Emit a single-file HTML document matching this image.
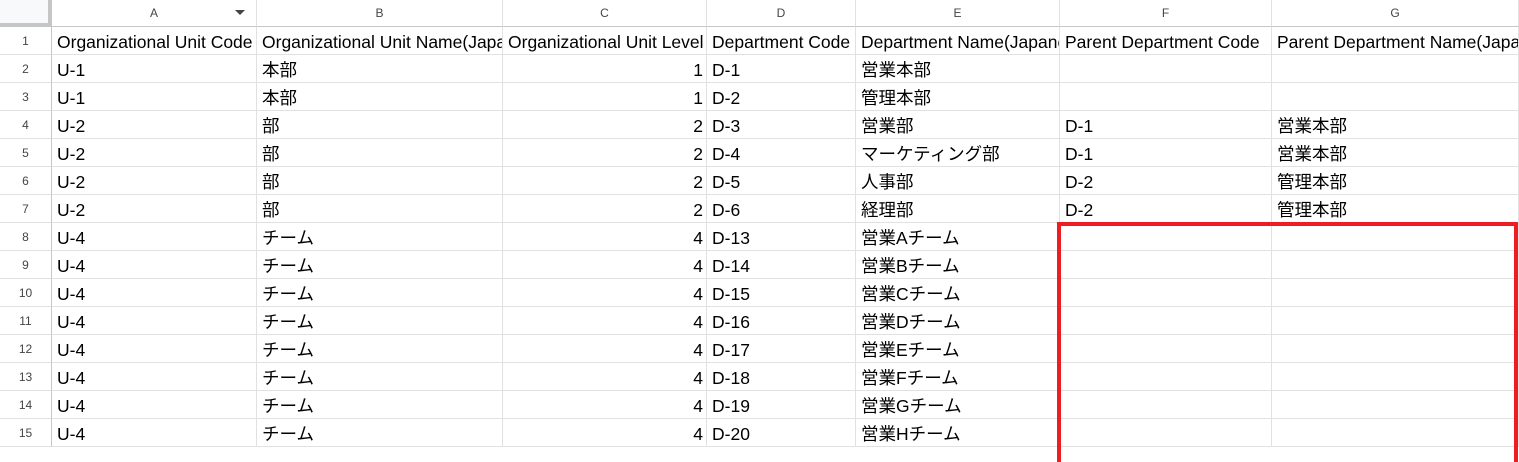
<!DOCTYPE html>
<html><head><meta charset="utf-8"><style>
body{margin:0;width:1519px;height:446px;overflow:hidden;background:#fff;font-family:"Liberation Sans","Noto Sans CJK JP",sans-serif;position:relative}
.row{position:absolute;left:0;width:1519px;height:28px}
.row>div{position:absolute;top:0;border-bottom:1px solid #e1e1e1;border-right:1px solid #e1e1e1;overflow:hidden;white-space:nowrap;font-size:17.5px;line-height:31px;color:#000;padding:0 3px 0 5px;box-sizing:border-box;height:28px}
.row>.n{left:0;width:52px;font-size:12px;color:#444;text-align:center;border-right:1px solid #c4c7c5;line-height:29px;padding:0}
.row>.a{left:52px;width:205px}
.row>.b{left:257px;width:246px}
.row>.c{left:503px;width:204px;text-align:right}
.row>.d{left:707px;width:149px}
.row>.e{left:856px;width:204px}
.row>.f{left:1060px;width:212px}
.row>.g{left:1272px;width:247px}
.hd{top:0;height:27px}
.hd>div{height:27px;font-size:12px;color:#444;text-align:center;line-height:26px;border-bottom:1px solid #c4c7c5;padding:0}
.hd>.c{text-align:center}
.hd>.n{background:#f8f9fa;border-right:4px solid #c4c7c5;border-bottom:4px solid #c4c7c5;height:27px}
.red{position:absolute;left:1057px;top:222px;width:461px;height:240px;border:4px solid #ee1d24;box-sizing:border-box;border-bottom:none}
.dd{position:absolute;left:235px;top:10px;width:0;height:0;border-left:5px solid transparent;border-right:5px solid transparent;border-top:5px solid #444}
</style></head><body>
<div class="row hd"><div class="n"></div><div class="a">A</div><div class="b">B</div><div class="c">C</div><div class="d">D</div><div class="e">E</div><div class="f">F</div><div class="g">G</div></div>
<div class="row" style="top:27px"><div class="n">1</div><div class="a">Organizational Unit Code</div><div class="b">Organizational Unit Name(Japanese)</div><div class="c" style="text-align:left">Organizational Unit Level</div><div class="d">Department Code</div><div class="e">Department Name(Japanese)</div><div class="f">Parent Department Code</div><div class="g">Parent Department Name(Japanese)</div></div>
<div class="row" style="top:55px"><div class="n">2</div><div class="a">U-1</div><div class="b">本部</div><div class="c">1</div><div class="d">D-1</div><div class="e">営業本部</div><div class="f"></div><div class="g"></div></div>
<div class="row" style="top:83px"><div class="n">3</div><div class="a">U-1</div><div class="b">本部</div><div class="c">1</div><div class="d">D-2</div><div class="e">管理本部</div><div class="f"></div><div class="g"></div></div>
<div class="row" style="top:111px"><div class="n">4</div><div class="a">U-2</div><div class="b">部</div><div class="c">2</div><div class="d">D-3</div><div class="e">営業部</div><div class="f">D-1</div><div class="g">営業本部</div></div>
<div class="row" style="top:139px"><div class="n">5</div><div class="a">U-2</div><div class="b">部</div><div class="c">2</div><div class="d">D-4</div><div class="e">マーケティング部</div><div class="f">D-1</div><div class="g">営業本部</div></div>
<div class="row" style="top:167px"><div class="n">6</div><div class="a">U-2</div><div class="b">部</div><div class="c">2</div><div class="d">D-5</div><div class="e">人事部</div><div class="f">D-2</div><div class="g">管理本部</div></div>
<div class="row" style="top:195px"><div class="n">7</div><div class="a">U-2</div><div class="b">部</div><div class="c">2</div><div class="d">D-6</div><div class="e">経理部</div><div class="f">D-2</div><div class="g">管理本部</div></div>
<div class="row" style="top:223px"><div class="n">8</div><div class="a">U-4</div><div class="b">チーム</div><div class="c">4</div><div class="d">D-13</div><div class="e">営業Aチーム</div><div class="f"></div><div class="g"></div></div>
<div class="row" style="top:251px"><div class="n">9</div><div class="a">U-4</div><div class="b">チーム</div><div class="c">4</div><div class="d">D-14</div><div class="e">営業Bチーム</div><div class="f"></div><div class="g"></div></div>
<div class="row" style="top:279px"><div class="n">10</div><div class="a">U-4</div><div class="b">チーム</div><div class="c">4</div><div class="d">D-15</div><div class="e">営業Cチーム</div><div class="f"></div><div class="g"></div></div>
<div class="row" style="top:307px"><div class="n">11</div><div class="a">U-4</div><div class="b">チーム</div><div class="c">4</div><div class="d">D-16</div><div class="e">営業Dチーム</div><div class="f"></div><div class="g"></div></div>
<div class="row" style="top:335px"><div class="n">12</div><div class="a">U-4</div><div class="b">チーム</div><div class="c">4</div><div class="d">D-17</div><div class="e">営業Eチーム</div><div class="f"></div><div class="g"></div></div>
<div class="row" style="top:363px"><div class="n">13</div><div class="a">U-4</div><div class="b">チーム</div><div class="c">4</div><div class="d">D-18</div><div class="e">営業Fチーム</div><div class="f"></div><div class="g"></div></div>
<div class="row" style="top:391px"><div class="n">14</div><div class="a">U-4</div><div class="b">チーム</div><div class="c">4</div><div class="d">D-19</div><div class="e">営業Gチーム</div><div class="f"></div><div class="g"></div></div>
<div class="row" style="top:419px"><div class="n">15</div><div class="a">U-4</div><div class="b">チーム</div><div class="c">4</div><div class="d">D-20</div><div class="e">営業Hチーム</div><div class="f"></div><div class="g"></div></div>
<div class="dd"></div>
<div class="red"></div>
</body></html>
